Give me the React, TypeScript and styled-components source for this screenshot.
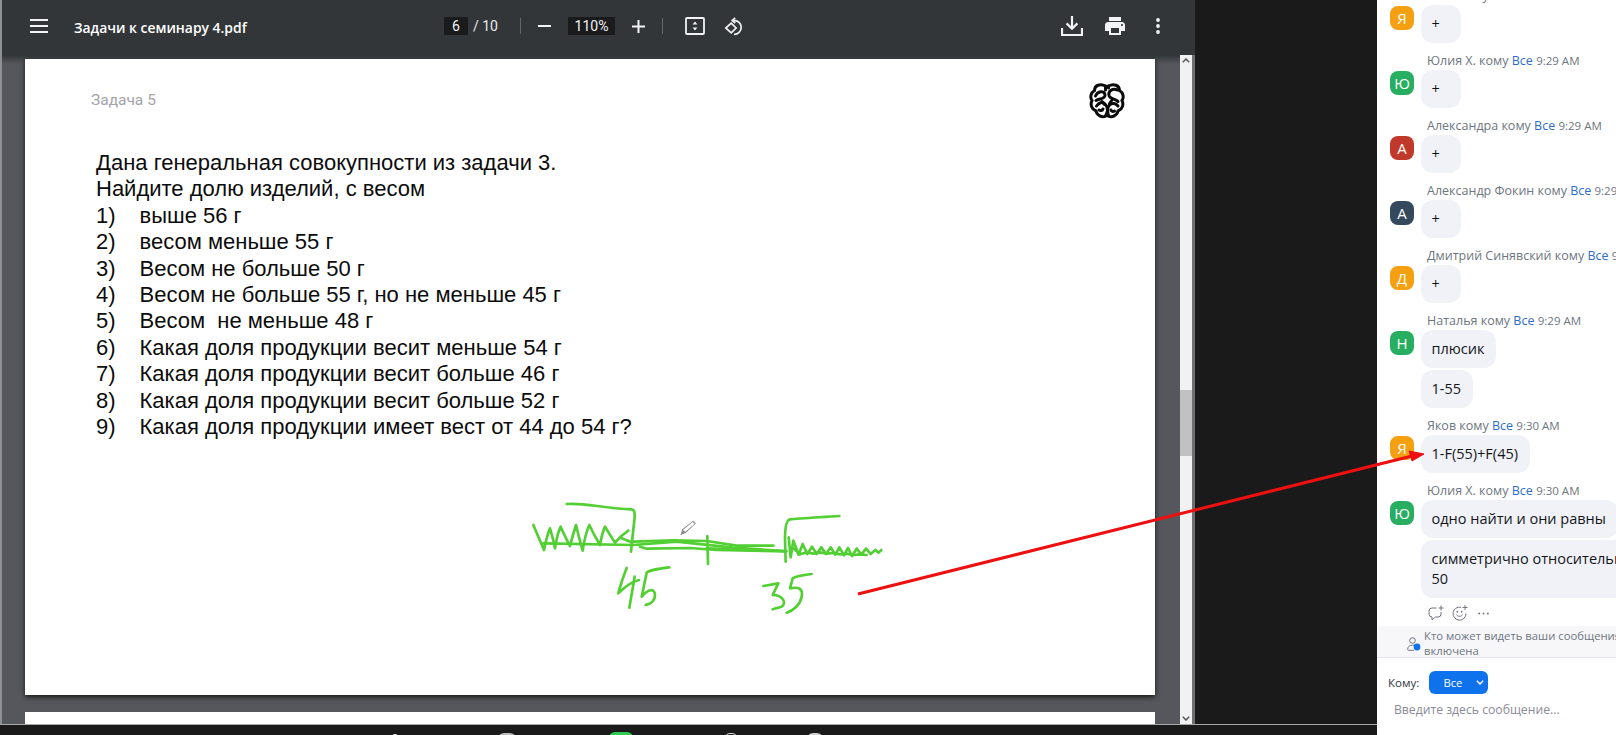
import React from 'react';
import styled, { createGlobalStyle } from 'styled-components';

const Global = createGlobalStyle`
  html, body { margin: 0; padding: 0; width: 1616px; height: 735px; overflow: hidden; background: #1a1a1a; }
  * { box-sizing: border-box; }
`;

const Screen = styled.div`
  position: relative;
  width: 1616px;
  height: 735px;
  display: grid;
  grid-template-columns: 1377px 239px;
  background: #1a1a1a;
  overflow: hidden;
`;
const Desktop = styled.div`
  display: grid;
  grid-template-rows: 724px 11px;
  min-width: 0;
`;
const Viewer = styled.section`
  width: 1195px;
  height: 724px;
  display: grid;
  grid-template-rows: 56px 1fr;
  border-left: 2px solid #8f9092;
  background: #55575c;
  overflow: hidden;
`;
const Toolbar = styled.header`
  display: grid;
  grid-template-columns: 442px auto 1fr auto;
  align-items: center;
  padding: 0 34px 4px 0;
  background: #323639;
  color: #f1f3f4;
  font-family: Roboto, "Noto Sans", sans-serif;
  font-size: 14px;
`;
const TitleGroup = styled.div`
  display: flex;
  align-items: center;
  gap: 26px;
  padding-left: 28px;
`;
const FileName = styled.div`
  font-family: "Open Sans", sans-serif;
  font-weight: 600;
  font-size: 13.9px;
  color: #fff;
  padding-top: 3px;
  white-space: nowrap;
`;
const Controls = styled.div`
  display: flex;
  align-items: center;
`;
const NumberBox = styled.div<{ $w: number }>`
  width: ${p => p.$w}px;
  height: 18px;
  background: #191b1c;
  display: flex;
  align-items: center;
  justify-content: center;
  color: #f1f3f4;
  font-size: 14px;
`;
const PageCount = styled.span`
  margin-left: 5px;
  width: 25px;
  white-space: nowrap;
  color: #e8eaed;
`;
const ZoomGroup = styled.div`
  display: flex;
  align-items: center;
  gap: 17px;
  margin-left: 22px;
`;
const Sep = styled.div`
  width: 1px;
  height: 16px;
  background: #63676a;
`;
const ViewGroup = styled.div`
  display: flex;
  align-items: center;
  gap: 19px;
  margin-left: 22px;
`;
const Actions = styled.div`
  display: flex;
  align-items: center;
  gap: 22px;
  grid-column: 4;
`;
const MoreSlot = styled.div`
  display: flex;
  margin-left: 8px;
`;
const Workspace = styled.div`
  display: grid;
  grid-template-columns: 1178px 1fr;
  min-height: 0;
`;
const Pages = styled.div`
  padding: 3px 25px 0 23px;
  display: flex;
  flex-direction: column;
  gap: 17px;
  overflow: hidden;
  background: linear-gradient(#36393c, #55575c 8px);
`;
const Page = styled.article`
  position: relative;
  flex: none;
  width: 1130px;
  height: 636px;
  background: #fff;
  box-shadow: 0 2px 5px rgba(0, 0, 0, .75);
  padding: 23px 30px 0 66px;
`;
const NextPage = styled.div`
  flex: none;
  height: 40px;
  width: 1130px;
  background: #fff;
`;
const PageHead = styled.div`
  display: flex;
  justify-content: space-between;
  align-items: flex-start;
`;
const Heading = styled.div`
  margin-top: 9px;
  font-family: Roboto, sans-serif;
  font-size: 15.5px;
  line-height: 18px;
  color: #a3a3aa;
`;
const Body = styled.div`
  margin: 31px 0 0 5px;
  font-family: "Liberation Sans", Arial, sans-serif;
  font-size: 22px;
  line-height: 26.4px;
  color: #0c0c0c;
`;
const Item = styled.div`
  display: grid;
  grid-template-columns: 43.5px 1fr;
  white-space: pre;
`;
const Scrollbar = styled.div`
  display: flex;
  flex-direction: column;
  justify-content: space-between;
  align-items: center;
  width: 15px;
  margin-top: -1px;
  background: #f1f1f1;
  border-right: 3px solid #6f7073;
  padding: 3px 0;
`;
const ScrollTrack = styled.div`
  flex: 1;
  width: 100%;
  padding-top: 327px;
`;
const ScrollThumb = styled.div`
  height: 66px;
  background: #c1c1c1;
`;
const Taskbar = styled.div`
  display: flex;
  align-items: flex-start;
  padding: 8px 0 0 392px;
  border-top: 1px solid #a8a8a8;
  background: #1a1a1a;
  overflow: hidden;
`;
const TaskIcon = styled.div<{ $w: number; $left: number; $color: string; $top?: number; $ring?: boolean }>`
  flex: none;
  width: ${p => p.$w}px;
  height: 8px;
  margin-left: ${p => p.$left}px;
  margin-top: ${p => p.$top ?? 0}px;
  border-radius: 6px 6px 0 0;
  background: ${p => (p.$ring ? 'transparent' : p.$color)};
  border: ${p => (p.$ring ? `1.5px solid ${p.$color}` : 'none')};
`;

const Chat = styled.aside`
  background: #fff;
  display: grid;
  grid-template-rows: 626px 32px 1fr;
  font-family: "Open Sans", "Noto Sans", sans-serif;
  min-width: 0;
  overflow: hidden;
`;
const List = styled.div`
  display: flex;
  flex-direction: column;
  justify-content: flex-end;
  overflow: hidden;
  padding-left: 13px;
`;
const Message = styled.div`
  flex: none;
  display: grid;
  grid-template-columns: 24px 1fr;
  column-gap: 7px;
  margin-top: 10px;
`;
const Sender = styled.div`
  grid-column: 2;
  height: 17px;
  line-height: 16px;
  padding-left: 6px;
  font-size: 12.5px;
  color: #6e7680;
  white-space: nowrap;
  overflow: hidden;
`;
const To = styled.span`
  color: #2d6ccb;
`;
const Time = styled.span`
  font-size: 11.5px;
`;
const Avatar = styled.div<{ $bg: string }>`
  grid-column: 1;
  width: 24px;
  height: 24px;
  margin-top: 1px;
  border-radius: 8px;
  background: ${p => p.$bg};
  color: #fff;
  display: flex;
  align-items: center;
  justify-content: center;
  font-size: 15px;
`;
const Stack = styled.div`
  display: flex;
  flex-direction: column;
  align-items: flex-start;
  gap: 2px;
  min-width: 0;
`;
const Bubble = styled.div`
  flex: none;
  width: max-content;
  min-width: 40px;
  padding: 9px 12px 9px 10.5px;
  border-radius: 12px;
  background: #f1f2f8;
  color: #131619;
  font-size: 14.5px;
  line-height: 20px;
  white-space: pre;
`;
const Reactions = styled.div`
  flex: none;
  height: 28px;
  display: flex;
  align-items: center;
  gap: 8px;
  padding: 2px 0 0 51px;
  margin-left: -13px;
  color: #747487;
`;
const Notice = styled.div`
  display: flex;
  background: #f7f7fa;
  border-bottom: 1px solid #e4e4ec;
  padding: 2px 0 0 30px;
  gap: 3px;
  overflow: hidden;
`;
const NoticeText = styled.div`
  font-size: 11.3px;
  line-height: 15px;
  color: #6e7680;
  white-space: pre;
`;
const Composer = styled.div`
  display: flex;
  flex-direction: column;
  padding: 13px 0 0 11px;
`;
const ToRow = styled.div`
  display: flex;
  align-items: center;
  gap: 10px;
  font-size: 11.6px;
  color: #30363d;
`;
const ToButton = styled.button`
  width: 59px;
  height: 23px;
  border: 0;
  border-radius: 6px;
  background: #0e72ed;
  color: #fff;
  font: inherit;
  font-size: 11.3px;
  display: flex;
  align-items: center;
  padding: 0 0 0 14px;
  gap: 14px;
`;
const Placeholder = styled.div`
  margin: 7px 0 0 6px;
  font-size: 12.2px;
  line-height: 18px;
  color: #8a8a98;
`;
const Overlay = styled.svg`
  position: absolute;
  left: 0;
  top: 0;
  pointer-events: none;
`;
const Ink = styled.svg`
  position: absolute;
  left: 475px;
  top: 421px;
  width: 420px;
  height: 150px;
  pointer-events: none;
`;

const MenuIcon = () => (
  <svg width="18" height="14" viewBox="0 0 18 14"><path d="M0 1h18M0 7h18M0 13h18" stroke="#f1f3f4" strokeWidth="2" /></svg>
);
const MinusIcon = () => (
  <svg width="13" height="2" viewBox="0 0 13 2"><path d="M0 1h13" stroke="#f1f3f4" strokeWidth="2" /></svg>
);
const PlusIcon = () => (
  <svg width="13" height="13" viewBox="0 0 13 13"><path d="M0 6.5h13M6.5 0v13" stroke="#f1f3f4" strokeWidth="2" /></svg>
);
const FitIcon = () => (
  <svg width="20" height="18" viewBox="0 0 20 18">
    <rect x="1" y="1" width="18" height="16" rx="1" fill="none" stroke="#f1f3f4" strokeWidth="1.8" />
    <path d="M10 4.5l2.4 3h-4.8zM10 13.5l-2.4-3h4.8z" fill="#f1f3f4" />
  </svg>
);
const RotateIcon = () => (
  <svg width="19" height="19" viewBox="0 0 19 19" fill="none" stroke="#f1f3f4" strokeWidth="1.7">
    <path d="M7.2 6.2L1.8 11l5.4 4.8 4.9-4.8z" />
    <path d="M9.6 3.4c4.5 0 7.6 3 7.6 6.8 0 4.2-3.3 7.4-7.2 7.2" />
    <path d="M11.2.8L8.2 3.4l3 2.6" />
  </svg>
);
const DownloadIcon = () => (
  <svg width="22" height="20" viewBox="0 0 22 20" fill="none" stroke="#f1f3f4" strokeWidth="2.2">
    <path d="M11 0v12M5.6 7.4L11 12.8l5.4-5.4" />
    <path d="M1 12v7h20v-7" />
  </svg>
);
const PrintIcon = () => (
  <svg width="20" height="18" viewBox="2 3 20 18"><path fill="#f1f3f4" d="M19 8H5c-1.66 0-3 1.34-3 3v6h4v4h12v-4h4v-6c0-1.66-1.34-3-3-3zm-3 11H8v-5h8v5zm3-7c-.55 0-1-.45-1-1s.45-1 1-1 1 .45 1 1-.45 1-1 1zm-1-9H6v4h12V3z" /></svg>
);
const MoreIcon = () => (
  <svg width="6" height="16" viewBox="0 0 6 16" fill="#f1f3f4"><circle cx="3" cy="2" r="1.9" /><circle cx="3" cy="8" r="1.9" /><circle cx="3" cy="14" r="1.9" /></svg>
);
const ChevronUp = () => (
  <svg width="8" height="5" viewBox="0 0 8 5"><path d="M.8 4.2L4 1l3.2 3.2" fill="none" stroke="#555" strokeWidth="1.5" /></svg>
);
const ChevronDown = () => (
  <svg width="8" height="5" viewBox="0 0 8 5"><path d="M.8.8L4 4l3.2-3.2" fill="none" stroke="#555" strokeWidth="1.5" /></svg>
);
const BrainLogo = () => (
  <svg width="36" height="37" viewBox="0 0 36 37" fill="none" stroke="#0b0b0b" strokeWidth="3" strokeLinecap="round">
    <path d="M16.5 4C11 1 5.5 3.5 5.5 8.5 1.8 10.5.8 15.5 3 18.5c-2 4-.3 9 4 10.500 1 4.500 6 7 9.500 5" />
    <path d="M19.500 4C25 1 30.500 3.500 30.500 8.500c3.700 2 4.700 7 2.500 10 2 4 .3 9-4 10.500-1 4.500-6 7-9.500 5" />
    <path d="M16.500 4v4M19.500 4v2" />
    <path d="M6.500 14c2-5 9-6 9.500-1 .4 4-5.500 3.500-9 5.500" />
    <path d="M28.500 8c-5-2-9.500 1-8.500 5.500 1 4 6.500 3 9 6" />
    <path d="M7.500 24c2.500-3.500 6-4.500 8.500-2 2.500 2.500 4 6 .5 12" />
    <path d="M10 28c1.500 1 3.500.7 4-1" />
    <path d="M29 24c-2-2.500-5.500-3.500-8-1.500-2.500 2-3 6-1.500 11.500" />
    <path d="M25.500 29c-1.500 1-3 .5-3.500-1" />
    <path d="M13 19.500l2.500 3M23 18l-2.500 3.500" />
  </svg>
);
const CommentPlus = () => (
  <svg width="16" height="16" viewBox="0 0 16 16" fill="none" stroke="currentColor" strokeWidth="1">
    <path d="M8.500 3H4a3 3 0 0 0-3 3v3a3 3 0 0 0 3 3v3l3.500-3H10a3 3 0 0 0 3-3V7" />
    <path d="M13 .5v5M10.500 3h5" />
  </svg>
);
const EmojiPlus = () => (
  <svg width="16" height="16" viewBox="0 0 16 16" fill="none" stroke="currentColor" strokeWidth="1">
    <path d="M9 2.300A6.500 6.500 0 1 0 14 8.500" />
    <path d="M4.500 9.500c1 2.500 5 2.500 6 0" />
    <path d="M13 0v5M10.500 2.500h5" />
    <circle cx="5.300" cy="6.800" r=".5" fill="currentColor" />
    <circle cx="9.700" cy="6.800" r=".5" fill="currentColor" />
  </svg>
);
const MoreDots = () => (
  <svg width="11" height="3" viewBox="0 0 11 3" fill="currentColor" style={{ marginLeft: 2 }}><circle cx="1.200" cy="1.500" r="1" /><circle cx="5.500" cy="1.500" r="1" /><circle cx="9.800" cy="1.500" r="1" /></svg>
);
const PersonDot = () => (
  <svg width="14" height="15" viewBox="0 0 14 15" style={{ flex: 'none', marginTop: 9 }} fill="none" stroke="#6e7680" strokeWidth="1">
    <circle cx="5.500" cy="3.500" r="2.800" />
    <path d="M.7 12.500c0-3 2-4.300 4.800-4.300 1 0 1.800.2 2.500.5M.7 12.500c0 .5.3.8.8.8H7" />
    <circle cx="10" cy="10" r="3.400" fill="#0e72ed" stroke="none" />
  </svg>
);
const ButtonChevron = () => (
  <svg width="8" height="5" viewBox="0 0 8 5"><path d="M.8.8L4 4l3.200-3.200" fill="none" stroke="#fff" strokeWidth="1.400" /></svg>
);

const items = [
  'выше 56 г',
  'весом меньше 55 г',
  'Весом не больше 50 г',
  'Весом не больше 55 г, но не меньше 45 г',
  'Весом  не меньше 48 г',
  'Какая доля продукции весит меньше 54 г',
  'Какая доля продукции весит больше 46 г',
  'Какая доля продукции весит больше 52 г',
  'Какая доля продукции имеет вест от 44 до 54 г?',
];

const ORANGE = '#f5a011';
const GREEN = '#27ae60';
const messages = [
  { name: 'Яков', time: '9:29 AM', letter: 'Я', color: ORANGE, texts: ['+'] },
  { name: 'Юлия Х.', time: '9:29 AM', letter: 'Ю', color: GREEN, texts: ['+'] },
  { name: 'Александра', time: '9:29 AM', letter: 'А', color: '#c0392b', texts: ['+'] },
  { name: 'Александр Фокин', time: '9:29 AM', letter: 'А', color: '#34495e', texts: ['+'] },
  { name: 'Дмитрий Синявский', time: '9:29 AM', letter: 'Д', color: ORANGE, texts: ['+'] },
  { name: 'Наталья', time: '9:29 AM', letter: 'Н', color: GREEN, texts: ['плюсик', '1-55'] },
  { name: 'Яков', time: '9:30 AM', letter: 'Я', color: ORANGE, texts: ['1-F(55)+F(45)'] },
  { name: 'Юлия Х.', time: '9:30 AM', letter: 'Ю', color: GREEN, texts: ['одно найти и они равны', 'симметрично относительно\n50'] },
];

const G = '#52cf33';

export default function App() {
  return (
    <Screen>
      <Global />
      <Desktop>
        <Viewer>
          <Toolbar>
            <TitleGroup>
              <MenuIcon />
              <FileName>Задачи к семинару 4.pdf</FileName>
            </TitleGroup>
            <Controls>
              <NumberBox $w={24}>6</NumberBox>
              <PageCount>/ 10</PageCount>
              <ZoomGroup>
                <Sep />
                <MinusIcon />
                <NumberBox $w={47}>110%</NumberBox>
                <PlusIcon />
                <Sep />
              </ZoomGroup>
              <ViewGroup>
                <FitIcon />
                <RotateIcon />
              </ViewGroup>
            </Controls>
            <Actions>
              <DownloadIcon />
              <PrintIcon />
              <MoreSlot><MoreIcon /></MoreSlot>
            </Actions>
          </Toolbar>
          <Workspace>
            <Pages>
              <Page>
                <PageHead>
                  <Heading>Задача 5</Heading>
                  <BrainLogo />
                </PageHead>
                <Body>
                  <div>Дана генеральная совокупности из задачи 3.</div>
                  <div>Найдите долю изделий, с весом</div>
                  {items.map((t, i) => (
                    <Item key={i}><span>{i + 1})</span><span>{t}</span></Item>
                  ))}
                </Body>
                <Ink viewBox="0 0 1260 450" fill="none" stroke={G} strokeWidth="8" strokeLinecap="round" strokeLinejoin="round">
                  <path d="M100 135L132 210Q140 170 150 145Q158 170 165 205Q172 160 182 140Q195 170 210 198Q220 160 228 135Q236 170 248 212Q256 160 268 135Q282 165 300 195Q306 160 315 140Q330 165 345 188Q365 165 385 152" />
                  <path d="M365 175l30 12" />
                  <path d="M200 72c60-4 100 12 195 16 12 2 10 20 6 50l-8 77" />
                  <path d="M130 190l270 5 130-10 170 18 150 10" />
                  <path d="M400 185l120-4 100 2 90 14 110 0" />
                  <path d="M420 200l20 6 130-2 80 6 210 4" />
                  <path d="M620 205l230 8" />
                  <path d="M622 168l2 84" />
                  <path d="M1018 108c-60 4-120 7-148 10-15 2-15 50-15 60l2 67" />
                  <path d="M866 172l6 60 8-50 16 42 12-32 14 30 14-22 14 22 14-20 14 20 14-20 14 22 12-22 14 24 12-22 12 24 14-22 14 18 14-18 14 16 14-12 10 8 8-8" />
                  <path d="M880 205l20 18 20-6 20 4 20-4 20 4 20-2 20 4 20-2 20 4 20-2 20 2" />
                  <path d="M380 264c-10 26-20 56-25 76 20-20 40-35 62-40" />
                  <path d="M404 290l-16 93" />
                  <path d="M508 262c-28 3-63 10-68 16l-15 72c20-25 40-25 40-5 0 20-15 27-28 30" />
                  <path d="M790 318l45-8-17 35c32 0 42 25 27 35l-27 8" />
                  <path d="M935 282c-25 3-50 8-57 13l-8 30c25-5 40 0 35 25-5 25-25 42-45 48" />
                  <g stroke="none">
                    <path d="M541 166l6-18 32-26 9 8-30 28z" fill="#8a8a8a" />
                    <path d="M549 150l29-24 6 5-28 24z" fill="#fff" />
                  </g>
                </Ink>
              </Page>
              <NextPage />
            </Pages>
            <Scrollbar>
              <ChevronUp />
              <ScrollTrack><ScrollThumb /></ScrollTrack>
              <ChevronDown />
            </Scrollbar>
          </Workspace>
        </Viewer>
        <Taskbar>
          <TaskIcon $w={6} $left={0} $color="#e8e8e8" $top={1} />
          <TaskIcon $w={18} $left={100} $color="#bdbdbd" />
          <TaskIcon $w={24} $left={93} $color="#2ecc55" $top={-1} />
          <TaskIcon $w={14} $left={91} $color="#d8d8d8" $ring />
          <TaskIcon $w={16} $left={69} $color="#d0d0d0" />
        </Taskbar>
      </Desktop>
      <Chat>
        <List>
          {messages.map((m, i) => (
            <Message key={i}>
              <Sender>{m.name} кому <To>Все</To> <Time>{m.time}</Time></Sender>
              <Avatar $bg={m.color}>{m.letter}</Avatar>
              <Stack>
                {m.texts.map((t, j) => <Bubble key={j}>{t}</Bubble>)}
              </Stack>
            </Message>
          ))}
          <Reactions>
            <CommentPlus />
            <EmojiPlus />
            <MoreDots />
          </Reactions>
        </List>
        <Notice>
          <PersonDot />
          <NoticeText>{'Кто может видеть ваши сообщения?\nвключена'}</NoticeText>
        </Notice>
        <Composer>
          <ToRow>
            Кому:
            <ToButton>Все <ButtonChevron /></ToButton>
          </ToRow>
          <Placeholder>Введите здесь сообщение...</Placeholder>
        </Composer>
      </Chat>
      <Overlay width="1616" height="735" viewBox="0 0 1616 735">
        <path d="M858 594L1412 456" stroke="#ee1010" strokeWidth="3" />
        <path d="M1424 454L1409 451 1412 461z" fill="#ee1010" stroke="#ee1010" strokeWidth="1" />
      </Overlay>
    </Screen>
  );
}
